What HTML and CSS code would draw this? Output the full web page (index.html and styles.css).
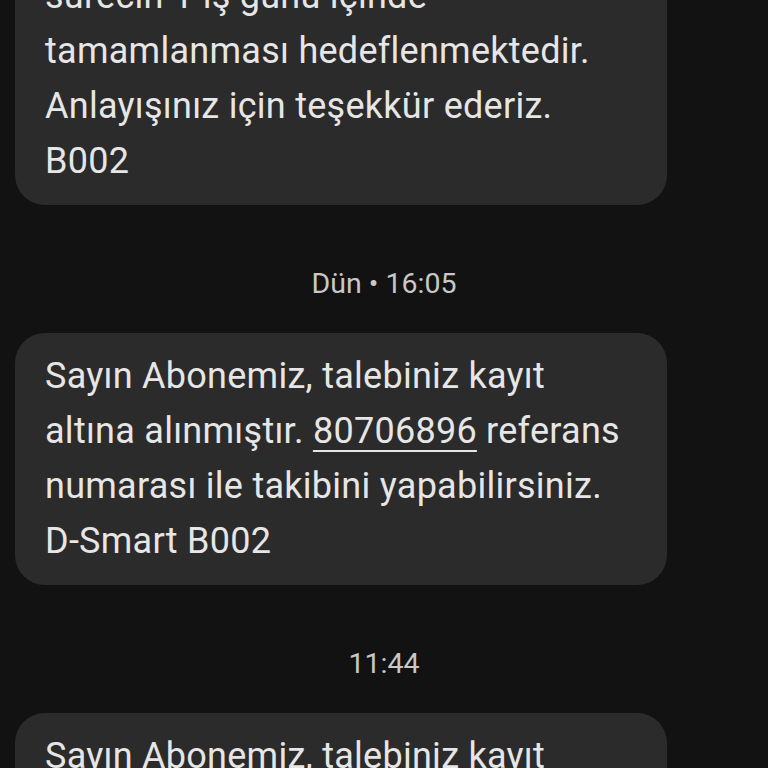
FILE: index.html
```html
<!DOCTYPE html>
<html lang="tr">
<head>
<meta charset="utf-8">
<link rel="stylesheet" href="styles.css">
</head>
<body>
<main class="thread">
  <div class="bubble">
    <p class="msg">yapılan işlemlerin ardından<br>sürecin 1 iş günü içinde<br>tamamlanması hedeflenmektedir.<br>Anlayışınız için teşekkür ederiz.<br>B002</p>
  </div>
  <div class="stamp">Dün • 16:05</div>
  <div class="bubble">
    <p class="msg">Sayın Abonemiz, talebiniz kayıt<br>altına alınmıştır. <span class="link">80706896</span> referans<br>numarası ile takibini yapabilirsiniz.<br>D-Smart B002</p>
  </div>
  <div class="stamp">11:44</div>
  <div class="bubble">
    <p class="msg">Sayın Abonemiz, talebiniz kayıt<br>altına alınmıştır. referans<br>numarası ile takibini yapabilirsiniz.</p>
  </div>
</main>
</body>
</html>
```
FILE: styles.css
```css
html, body {
  margin: 0;
  padding: 0;
  background: #121212;
  overflow: hidden;
  height: 768px;
}
body {
  font-family: Roboto, "Noto Sans", sans-serif;
  color: #e6e6e6;
}
.thread {
  display: flex;
  flex-direction: column;
  align-items: flex-start;
  padding: 0 15px;
  margin-top: -102px;
}
.bubble {
  width: 652px;
  box-sizing: border-box;
  background: #2b2b2b;
  border-radius: 30px;
  padding: 16px 30px;
}
.msg {
  margin: 0;
  font-size: 36px;
  line-height: 55px;
  letter-spacing: 0.27px;
}
.link {
  text-decoration: underline;
  text-decoration-thickness: 2px;
  text-underline-offset: 7px;
}
.stamp {
  align-self: stretch;
  text-align: center;
  font-size: 28.5px;
  line-height: 34px;
  color: #c8c8c8;
  margin: 62px 0 32px;
}
```
